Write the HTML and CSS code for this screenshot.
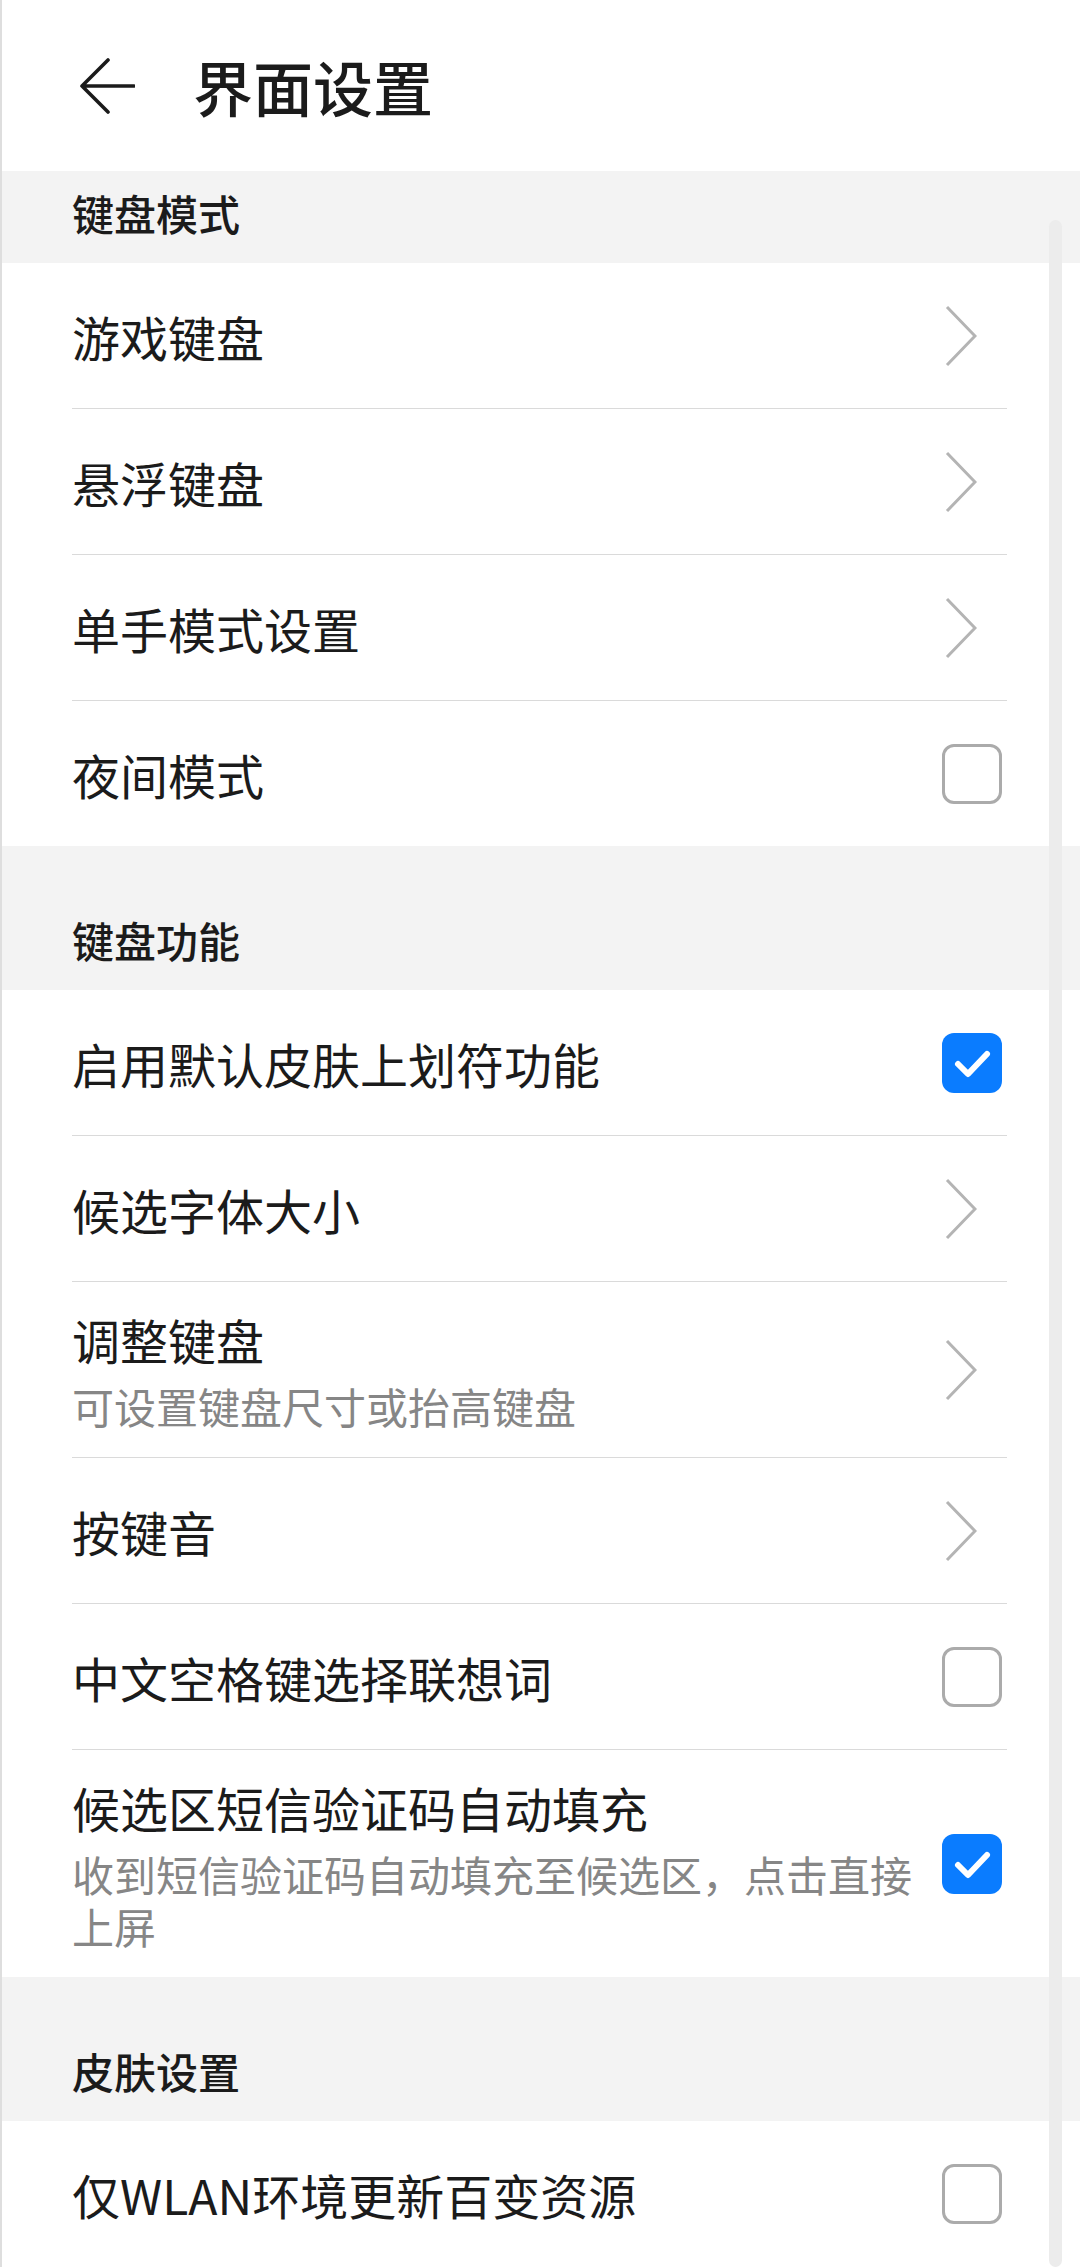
FILE: index.html
```html
<!DOCTYPE html>
<html lang="zh-CN">
<head>
    <meta charset="UTF-8">
    <meta name="viewport" content="width=device-width, initial-scale=1.0">
    <title>界面设置</title>
    <link rel="stylesheet" href="styles.css">
</head>
<body>
    <div class="page">
        <header class="topbar">
            <svg class="back" viewBox="0 0 56 56" width="56" height="56">
                <path d="M29 2 L3 28 L29 54 M3 28 H55" fill="none" stroke="#1b1b1b" stroke-width="3.6" stroke-linecap="round" stroke-linejoin="round"/>
            </svg>
            <h1>界面设置</h1>
        </header>

        <!-- 键盘模式 -->
        <div class="section-title first">键盘模式</div>
        <ul class="list">
            <li class="item">
                <div class="text"><span class="label">游戏键盘</span></div>
                <svg class="chevron" viewBox="0 0 32 62" width="32" height="62"><path d="M2 2 L30 31 L2 60" fill="none" stroke="#b4b4b4" stroke-width="3"/></svg>
            </li>
            <li class="item">
                <div class="text"><span class="label">悬浮键盘</span></div>
                <svg class="chevron" viewBox="0 0 32 62" width="32" height="62"><path d="M2 2 L30 31 L2 60" fill="none" stroke="#b4b4b4" stroke-width="3"/></svg>
            </li>
            <li class="item">
                <div class="text"><span class="label">单手模式设置</span></div>
                <svg class="chevron" viewBox="0 0 32 62" width="32" height="62"><path d="M2 2 L30 31 L2 60" fill="none" stroke="#b4b4b4" stroke-width="3"/></svg>
            </li>
            <li class="item">
                <div class="text"><span class="label">夜间模式</span></div>
                <span class="checkbox"></span>
            </li>
        </ul>

        <!-- 键盘功能 -->
        <div class="section-title">键盘功能</div>
        <ul class="list">
            <li class="item">
                <div class="text"><span class="label">启用默认皮肤上划符功能</span></div>
                <span class="checkbox checked">
                    <svg viewBox="0 0 60 60" width="60" height="60"><path d="M16 31 L26 41 L45 21" fill="none" stroke="#fff" stroke-width="6" stroke-linecap="round" stroke-linejoin="round"/></svg>
                </span>
            </li>
            <li class="item">
                <div class="text"><span class="label">候选字体大小</span></div>
                <svg class="chevron" viewBox="0 0 32 62" width="32" height="62"><path d="M2 2 L30 31 L2 60" fill="none" stroke="#b4b4b4" stroke-width="3"/></svg>
            </li>
            <li class="item tall">
                <div class="text">
                    <span class="label">调整键盘</span>
                    <span class="sub">可设置键盘尺寸或抬高键盘</span>
                </div>
                <svg class="chevron" viewBox="0 0 32 62" width="32" height="62"><path d="M2 2 L30 31 L2 60" fill="none" stroke="#b4b4b4" stroke-width="3"/></svg>
            </li>
            <li class="item">
                <div class="text"><span class="label">按键音</span></div>
                <svg class="chevron" viewBox="0 0 32 62" width="32" height="62"><path d="M2 2 L30 31 L2 60" fill="none" stroke="#b4b4b4" stroke-width="3"/></svg>
            </li>
            <li class="item">
                <div class="text"><span class="label">中文空格键选择联想词</span></div>
                <span class="checkbox"></span>
            </li>
            <li class="item tall">
                <div class="text">
                    <span class="label">候选区短信验证码自动填充</span>
                    <span class="sub">收到短信验证码自动填充至候选区，点击直接上屏</span>
                </div>
                <span class="checkbox checked">
                    <svg viewBox="0 0 60 60" width="60" height="60"><path d="M16 31 L26 41 L45 21" fill="none" stroke="#fff" stroke-width="6" stroke-linecap="round" stroke-linejoin="round"/></svg>
                </span>
            </li>
        </ul>

        <!-- 皮肤设置 -->
        <div class="section-title">皮肤设置</div>
        <ul class="list">
            <li class="item">
                <div class="text"><span class="label">仅WLAN环境更新百变资源</span></div>
                <span class="checkbox"></span>
            </li>
        </ul>

        <div class="scrollbar"></div>
    </div>
</body>
</html>
```

FILE: styles.css
```css
* {
    margin: 0;
    padding: 0;
    box-sizing: border-box;
}

body {
    background: #fff;
    color: #1b1b1b;
    font-family: "Noto Sans CJK SC", "Noto Sans", sans-serif;
    overflow: hidden;
}

.page {
    position: relative;
    width: 1080px;
    height: 2267px;
    overflow: hidden;
    border-left: 2px solid #dedede;
}

.topbar {
    height: 171px;
    display: flex;
    align-items: center;
    padding-left: 77px;
}

.back {
    display: block;
    flex: none;
}

.topbar h1 {
    margin-left: 58px;
    font-size: 60px;
    font-weight: 500;
    line-height: 72px;
    color: #1b1b1b;
}

.section-title {
    background: #f3f3f3;
    padding: 66px 0 22px 70px;
    font-size: 42px;
    font-weight: 500;
    line-height: 56px;
    color: #1b1b1b;
}

.section-title.first {
    padding-top: 14px;
}

.list {
    list-style: none;
}

.item {
    display: flex;
    align-items: center;
    min-height: 146px;
    margin: 0 73px 0 70px;
    border-bottom: 1px solid #dadada;
}

.item:last-child {
    border-bottom: none;
    min-height: 145px;
}

.item.tall {
    padding: 25px 0;
}

.text {
    flex: 1;
    display: flex;
    flex-direction: column;
    padding-right: 24px;
}

.label {
    font-size: 48px;
    line-height: 64px;
}

.sub {
    margin-top: 9px;
    font-size: 42px;
    line-height: 52px;
    color: #868686;
}

.chevron {
    display: block;
    flex: none;
    margin-right: 30px;
}

.checkbox {
    flex: none;
    width: 60px;
    height: 60px;
    margin-right: 5px;
    border: 3px solid #ababab;
    border-radius: 12px;
    background: #fff;
}

.checkbox.checked {
    border: none;
    background: #0a7cff;
}

.checkbox svg {
    display: block;
}

.scrollbar {
    position: absolute;
    top: 220px;
    right: 18px;
    bottom: 0;
    width: 13px;
    border-radius: 7px;
    background: #ececec;
}
```
